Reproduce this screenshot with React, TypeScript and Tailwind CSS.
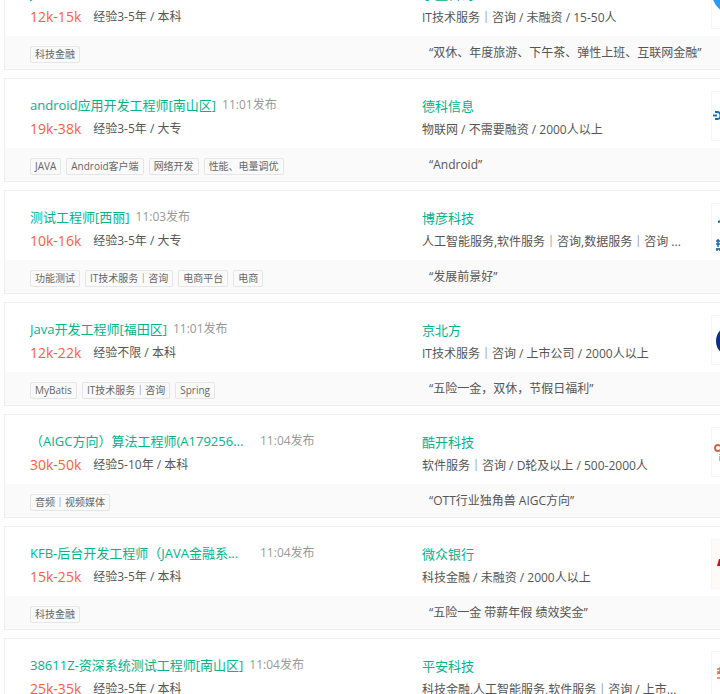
import type { ReactNode } from "react";

interface Job {
  id: number;
  title: string;
  clipped?: boolean;
  time: string;
  salary: string;
  require: string;
  tags: string[];
  company: string;
  industry: string;
  slogan: string;
  logo: ReactNode;
}

const jobs: Job[] = [
  {
    id: 1,
    title: "java开发工程师[南山区]",
    time: "11:01发布",
    salary: "12k-15k",
    require: "经验3-5年 / 本科",
    tags: ["科技金融"],
    company: "宇量咨询",
    industry: "IT技术服务｜咨询 / 未融资 / 15-50人",
    slogan: "双休、年度旅游、下午茶、弹性上班、互联网金融",
    logo: (
      <g>
        <circle cx="21" cy="13" r="21" fill="#2b9cf5" />
        <path d="M6 14l3 7 4-6z" fill="#ffffff" />
      </g>
    ),
  },
  {
    id: 2,
    title: "android应用开发工程师[南山区]",
    time: "11:01发布",
    salary: "19k-38k",
    require: "经验3-5年 / 大专",
    tags: ["JAVA", "Android客户端", "网络开发", "性能、电量调优"],
    company: "德科信息",
    industry: "物联网 / 不需要融资 / 2000人以上",
    slogan: "Android",
    logo: (
      <g fill="none" stroke="#1273b8" strokeWidth="1.8">
        <path d="M3 20h2.500a3 3.500 0 0 1 0 7H3M1 23.500h4" />
      </g>
    ),
  },
  {
    id: 3,
    title: "测试工程师[西丽]",
    time: "11:03发布",
    salary: "10k-16k",
    require: "经验3-5年 / 大专",
    tags: ["功能测试", "IT技术服务｜咨询", "电商平台", "电商"],
    company: "博彦科技",
    industry: "人工智能服务,软件服务｜咨询,数据服务｜咨询 ...",
    slogan: "发展前景好",
    logo: (
      <g fill="none" stroke="#1f6aa5">
        <path d="M6 18l3-1" strokeWidth="2" />
        <path d="M4 37h5M6 35v8M4 40h5M4 45h5M5 44v3M8 44v3" strokeWidth="1.5" />
      </g>
    ),
  },
  {
    id: 4,
    title: "Java开发工程师[福田区]",
    time: "11:01发布",
    salary: "12k-22k",
    require: "经验不限 / 本科",
    tags: ["MyBatis", "IT技术服务｜咨询", "Spring"],
    company: "京北方",
    industry: "IT技术服务｜咨询 / 上市公司 / 2000人以上",
    slogan: "五险一金，双休，节假日福利",
    logo: <circle cx="20" cy="25" r="16" fill="#0b318f" />,
  },
  {
    id: 5,
    title: "（AIGC方向）算法工程师(A179256...",
    clipped: true,
    time: "11:04发布",
    salary: "30k-50k",
    require: "经验5-10年 / 本科",
    tags: ["音频｜视频媒体"],
    company: "酷开科技",
    industry: "软件服务｜咨询 / D轮及以上 / 500-2000人",
    slogan: "OTT行业独角兽 AIGC方向",
    logo: (
      <g fill="none">
        <circle cx="6" cy="20" r="3" stroke="#d9603b" strokeWidth="1.8" />
        <path d="M7.500 26v1M7.500 28v5" stroke="#b5b5b5" />
      </g>
    ),
  },
  {
    id: 6,
    title: "KFB-后台开发工程师（JAVA金融系...",
    clipped: true,
    time: "11:04发布",
    salary: "15k-25k",
    require: "经验3-5年 / 本科",
    tags: ["科技金融"],
    company: "微众银行",
    industry: "科技金融 / 未融资 / 2000人以上",
    slogan: "五险一金 带薪年假 绩效奖金",
    logo: (
      <g>
        <path d="M0 0h48v48H0z" fill="#fffafa" />
        <path d="M5 26l2-7h7v7z" fill="#e60012" />
      </g>
    ),
  },
  {
    id: 7,
    title: "38611Z-资深系统测试工程师[南山区]",
    time: "11:04发布",
    salary: "25k-35k",
    require: "经验3-5年 / 本科",
    tags: ["科技金融"],
    company: "平安科技",
    industry: "科技金融,人工智能服务,软件服务｜咨询 / 上市...",
    slogan: "五险一金",
    logo: <path d="M5 17h7M5 20h7M8 15v7M5 22l5-2M5 26h7" fill="none" stroke="#f06a35" strokeWidth="1.3" />,
  },
];

function JobCard({ job }: { job: Job }) {
  return (
    <li className="border border-[#eeeeee] bg-white">
      <div className="flex h-[69px]">
        <div className="w-[417px] shrink-0 pt-3.5 pl-[25px]">
          <div className="flex items-center gap-1.5 leading-6">
            <a
              href="#"
              className={`truncate text-[13px] text-[#00b38a] ${job.clipped ? "w-[224px]" : ""}`}
            >
              {job.title}
            </a>
            <span className="text-[12px] text-[#999999]">{job.time}</span>
          </div>
          <div className="flex items-center gap-3 leading-6">
            <span className="text-[14px] text-[#fd5f39]">{job.salary}</span>
            <span className="text-[12px] text-[#555555]">{job.require}</span>
          </div>
        </div>
        <div className="w-[289px] shrink-0 pt-[15px]">
          <a href="#" className="block text-[13px] leading-6 text-[#00b38a]">
            {job.company}
          </a>
          <p className="text-[12px] leading-6 whitespace-nowrap text-[#555555]">{job.industry}</p>
        </div>
        <a href="#" aria-label={job.company} className="mt-3 size-[50px] shrink-0 border border-[#f5f5f5]">
          <svg viewBox="0 0 48 48" className="size-full">
            {job.logo}
          </svg>
        </a>
      </div>
      <div className="flex h-[33px] items-start bg-[#fafafa]">
        <ul className="flex w-[424px] shrink-0 gap-[5px] pt-2.5 pl-[25px]">
          {job.tags.map((tag) => (
            <li
              key={tag}
              className="rounded-xs border border-[#e6e6e6] px-1 text-[10px] leading-[15px] text-[#666666]"
            >
              {tag}
            </li>
          ))}
        </ul>
        <p className="pt-[5px] text-[12px] leading-6 whitespace-nowrap text-[#555555]">“{job.slogan}”</p>
      </div>
    </li>
  );
}

export default function App() {
  return (
    <main className="h-screen overflow-hidden bg-white pl-1 font-['Open_Sans','Noto_Sans_CJK_SC',sans-serif]">
      <ul className="-mt-[34px] flex min-w-[780px] flex-col gap-2">
        {jobs.map((job) => (
          <JobCard key={job.id} job={job} />
        ))}
      </ul>
    </main>
  );
}
